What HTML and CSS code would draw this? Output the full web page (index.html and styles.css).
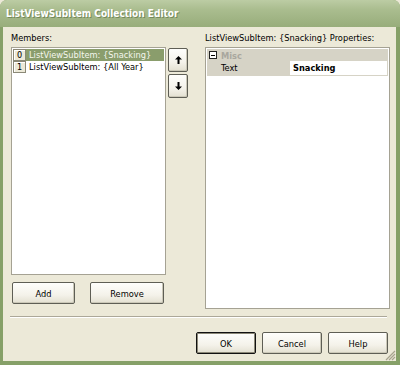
FILE: index.html
```html
<!DOCTYPE html>
<html>
<head>
<meta charset="utf-8">
<link rel="stylesheet" href="styles.css">
</head>
<body>
<div class="window">
  <div class="titlebar">ListViewSubItem Collection Editor</div>
  <div class="client">
    <div class="main">
      <div class="left">
        <div class="label">Members:</div>
        <div class="left-row">
          <div class="listbox">
            <div class="item selected"><span class="idx">0</span><span class="txt">ListViewSubItem: {Snacking}</span></div>
            <div class="item"><span class="idx">1</span><span class="txt">ListViewSubItem: {All Year}</span></div>
          </div>
          <div class="arrows">
            <button class="btn arrow"><svg width="7" height="8" viewBox="0 0 7 8"><path d="M3.5 0 L7 3.5 L4.5 3.5 L4.5 8 L2.5 8 L2.5 3.5 L0 3.5 Z" fill="#000"/></svg></button>
            <button class="btn arrow"><svg width="7" height="8" viewBox="0 0 7 8"><path d="M3.5 8 L7 4.5 L4.5 4.5 L4.5 0 L2.5 0 L2.5 4.5 L0 4.5 Z" fill="#000"/></svg></button>
          </div>
        </div>
        <div class="left-buttons">
          <button class="btn add">Add</button>
          <button class="btn remove">Remove</button>
        </div>
      </div>
      <div class="right">
        <div class="label">ListViewSubItem: {Snacking} Properties:</div>
        <div class="grid">
          <div class="cat"><span class="minus"></span><span class="cat-name">Misc</span></div>
          <div class="prop"><span class="pname">Text</span><span class="pval">Snacking</span></div>
        </div>
      </div>
    </div>
    <div class="sep"></div>
    <div class="footer">
      <button class="btn ok default">OK</button>
      <button class="btn ok">Cancel</button>
      <button class="btn ok">Help</button>
    </div>
    <div class="grip"><svg width="12" height="12" viewBox="0 0 12 12"><path d="M11 2 L2 11 M11 5 L5 11 M11 8 L8 11" stroke="#a7a38f" stroke-width="1.2"/></svg></div>
  </div>
</div>
</body>
</html>
```
FILE: styles.css
```css
* { box-sizing: border-box; }
html, body { margin: 0; padding: 0; }
body {
  width: 400px; height: 365px; overflow: hidden;
  font-family: "DejaVu Sans Condensed", "DejaVu Sans", sans-serif;
  font-size: 9.2px; color: #000; background: #ece9d8;
  white-space: nowrap;
}
.window {
  width: 400px; height: 365px;
  display: flex; flex-direction: column;
  background: #86a068;
  border-radius: 7px 7px 0 0;
  overflow: hidden;
}
.titlebar {
  height: 27px; flex: none;
  background: linear-gradient(#bccca4 0%, #aabd8f 35%, #a0b484 70%, #98ad7b 100%);
  color: #fff; font-weight: bold; font-size: 10px;
  padding: 8px 0 0 6px;
  text-shadow: 1px 1px 0 #74895a;
  font-family: "DejaVu Sans Condensed", "DejaVu Sans", sans-serif;
}
.client {
  flex: 1; position: relative;
  margin: 0 4px 4px 3px;
  background: #ece9d8;
  display: flex; flex-direction: column;
}
.main { display: flex; height: 283px; padding: 0 0 0 8px; }
.label { height: 20px; padding-top: 5px; line-height: 12px; }
.left { width: 188px; display: flex; flex-direction: column; }
.left-row { display: flex; }
.listbox {
  width: 155px; height: 228px; background: #fff;
  border: 1px solid #a5a293;
  padding: 1px;
}
.item { display: flex; height: 12px; line-height: 11px; }
.idx {
  width: 13px; height: 12px; border: 1px solid #8b8977; background: #ece9d8;
  text-align: center; font-size: 9px; line-height: 10px;
  box-shadow: inset 1px 1px 0 #fff;
  flex: none;
}
.txt { padding: 0 4px 0 3px; height: 12px; line-height: 12px; }
.selected .txt { background: #8a9d6c; color: #f4f6ee; width: 138px; }
.arrows { display: flex; flex-direction: column; gap: 2px; margin: 1px 0 0 2px; }
.btn {
  font: inherit; color: #000;
  background: linear-gradient(#fefefc, #f4f2ea 60%, #e3e0d1);
  border: 1px solid #5e5e55;
  border-radius: 2px;
  padding: 0;
  box-shadow: inset -1px -1px 0 #cbc8b8;
}
.arrow { width: 20px; height: 24px; display: flex; align-items: center; justify-content: center; }
.left-buttons { display: flex; gap: 15px; margin-top: 7px; padding-left: 1px; }
.add { width: 63px; height: 22px; }
.remove { width: 74px; height: 22px; }
.right { width: 185px; margin-left: 6px; display: flex; flex-direction: column; }
.grid {
  width: 185px; height: 262px; background: #fff;
  border: 1px solid #a5a293; padding: 1px;
}
.cat { height: 12px; display: flex; align-items: center; background: #d6d3c6; }
.minus {
  width: 8px; height: 8px; border: 1px solid #222; margin: 0 4px 0 2px; position: relative; background: #fff; flex: none;
}
.minus::after { content: ""; position: absolute; left: 1px; right: 1px; top: 2.5px; height: 1px; background: #000; }
.cat-name { color: #a9a79e; font-weight: bold; }
.prop { display: flex; height: 15px; line-height: 14px; border-bottom: 1px solid #d6d3c6; }
.pname { width: 83px; padding-left: 14px; background: #d6d3c6; }
.pval { flex: 1; font-weight: bold; padding-left: 3px; border-right: 1px solid #d6d3c6; }
.sep { height: 2px; margin: 6px 9px 0 7px; border-top: 1px solid #aca899; border-bottom: 1px solid #fff; }
.footer { display: flex; justify-content: flex-end; gap: 6px; padding: 14px 8px 0 0; }
.ok { width: 60px; height: 22px; }
.default { border: 1px solid #111; box-shadow: inset 0 0 0 1px #8b8877; }
.grip { position: absolute; right: 0; bottom: 0; width: 12px; height: 12px; }
.grip svg { display: block; }
```
